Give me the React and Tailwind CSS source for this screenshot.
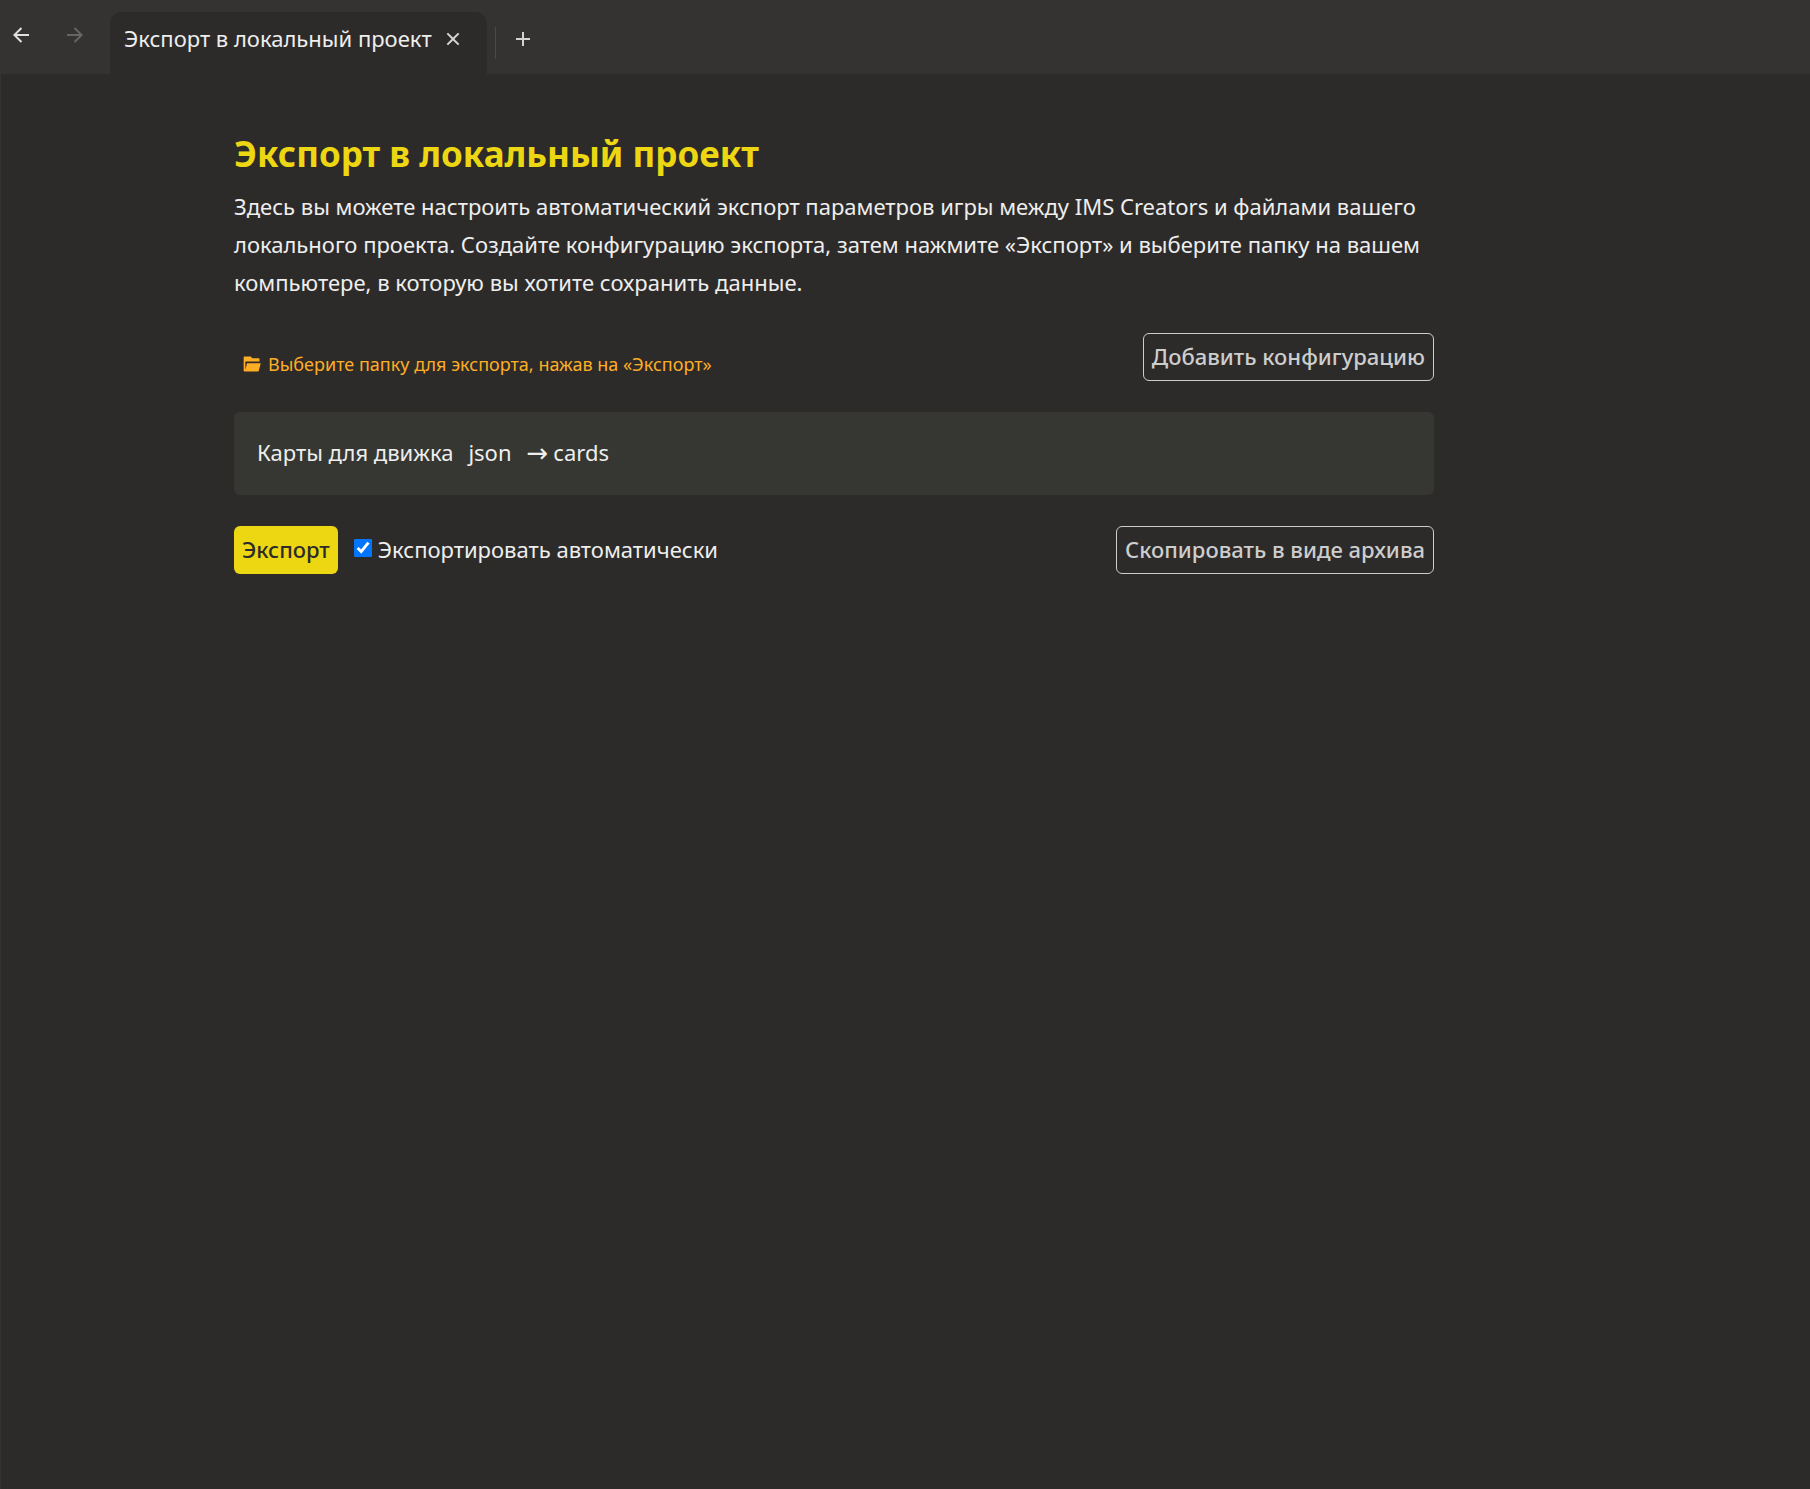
import { useState } from 'react';
import {
  RiAddLine,
  RiArrowLeftLine,
  RiArrowRightLine,
  RiCloseLine,
  RiFolderOpenFill,
} from 'react-icons/ri';

const configs = [{ id: 1, title: 'Карты для движка', format: 'json', target: 'cards' }];

function TabsBar() {
  return (
    <header className="flex h-[74px] bg-[#343331]">
      <nav className="flex h-[70px] w-[109px] items-center gap-[30px] pl-2">
        <button type="button" aria-label="Назад" className="text-[#e0e0e0]">
          <RiArrowLeftLine size={24} />
        </button>
        <button type="button" aria-label="Вперёд" disabled className="text-[#666564]">
          <RiArrowRightLine size={24} />
        </button>
      </nav>
      <div className="mt-3 flex w-[377px] items-center justify-between rounded-t-xl bg-[#2d2b29] pr-[22px] pb-2 pl-[14px]">
        <a href="#export" className="pb-0.5 text-[22px] leading-8 whitespace-nowrap">
          Экспорт в локальный проект
        </a>
        <button type="button" aria-label="Закрыть вкладку" className="text-[#d4d4d4]">
          <RiCloseLine size={24} />
        </button>
      </div>
      <div className="mt-3 flex items-center pb-2">
        <div className="mt-2 ml-2 h-8 w-px bg-[#4a4947]" />
        <button type="button" aria-label="Новая вкладка" className="ml-[15px] text-[#d4d4d4]">
          <RiAddLine size={24} />
        </button>
      </div>
    </header>
  );
}

function OutlineButton({ children }) {
  return (
    <button
      type="button"
      className="h-12 rounded-md border border-[#cdcdcd] px-2 pb-px text-[22px] font-medium whitespace-nowrap text-[#cdcdcd]"
    >
      {children}
    </button>
  );
}

export default function App() {
  const [auto, setAuto] = useState(true);

  return (
    <div className="min-h-screen border-l border-[#343331] bg-[#2d2b29] font-['Noto_Sans',sans-serif] text-[#eeeeee]">
      <TabsBar />

      <main id="export" className="mx-[233px] max-w-[1200px] pt-14">
        <h1 className="text-[35px] leading-[48px] font-bold text-[#ecd712]">
          Экспорт в локальный проект
        </h1>
        <p className="mt-[9px] text-[22px] leading-[38px]">
          Здесь вы можете настроить автоматический экспорт параметров игры между IMS Creators и
          файлами вашего локального проекта. Создайте конфигурацию экспорта, затем нажмите
          «Экспорт» и выберите папку на вашем компьютере, в которую вы хотите сохранить данные.
        </p>

        <div className="mt-8 flex items-start justify-between">
          <div className="mt-[15px] flex items-center gap-[6px] pl-2 text-lg leading-8 text-[#feae25]">
            <RiFolderOpenFill size={20} />
            <span>Выберите папку для экспорта, нажав на «Экспорт»</span>
          </div>
          <OutlineButton>Добавить конфигурацию</OutlineButton>
        </div>

        <ul className="mt-[31px]">
          {configs.map((config) => (
            <li
              key={config.id}
              className="flex h-[83px] items-center gap-[15px] rounded-md bg-[#363732] px-[23px] pb-0.5 text-[22px]"
            >
              <span>{config.title}</span>
              <span>{config.format}</span>
              <span className="flex items-center gap-[5px]">
                <span className="font-['DejaVu_Sans',sans-serif] text-[26px] leading-none">→</span>
                {config.target}
              </span>
            </li>
          ))}
        </ul>

        <div className="mt-[31px] flex items-center justify-between">
          <div className="flex items-center gap-4">
            <button
              type="button"
              className="h-12 rounded-md bg-[#ecd712] px-2 pb-px text-[22px] font-medium text-[#2d2b29]"
            >
              Экспорт
            </button>
            <label className="flex items-center gap-[6px] pb-0.5 text-[22px]">
              <input
                type="checkbox"
                checked={auto}
                onChange={(e) => setAuto(e.target.checked)}
                className="mb-0.5 size-[18px] accent-[#0075ff]"
              />
              Экспортировать автоматически
            </label>
          </div>
          <OutlineButton>Скопировать в виде архива</OutlineButton>
        </div>
      </main>
    </div>
  );
}
